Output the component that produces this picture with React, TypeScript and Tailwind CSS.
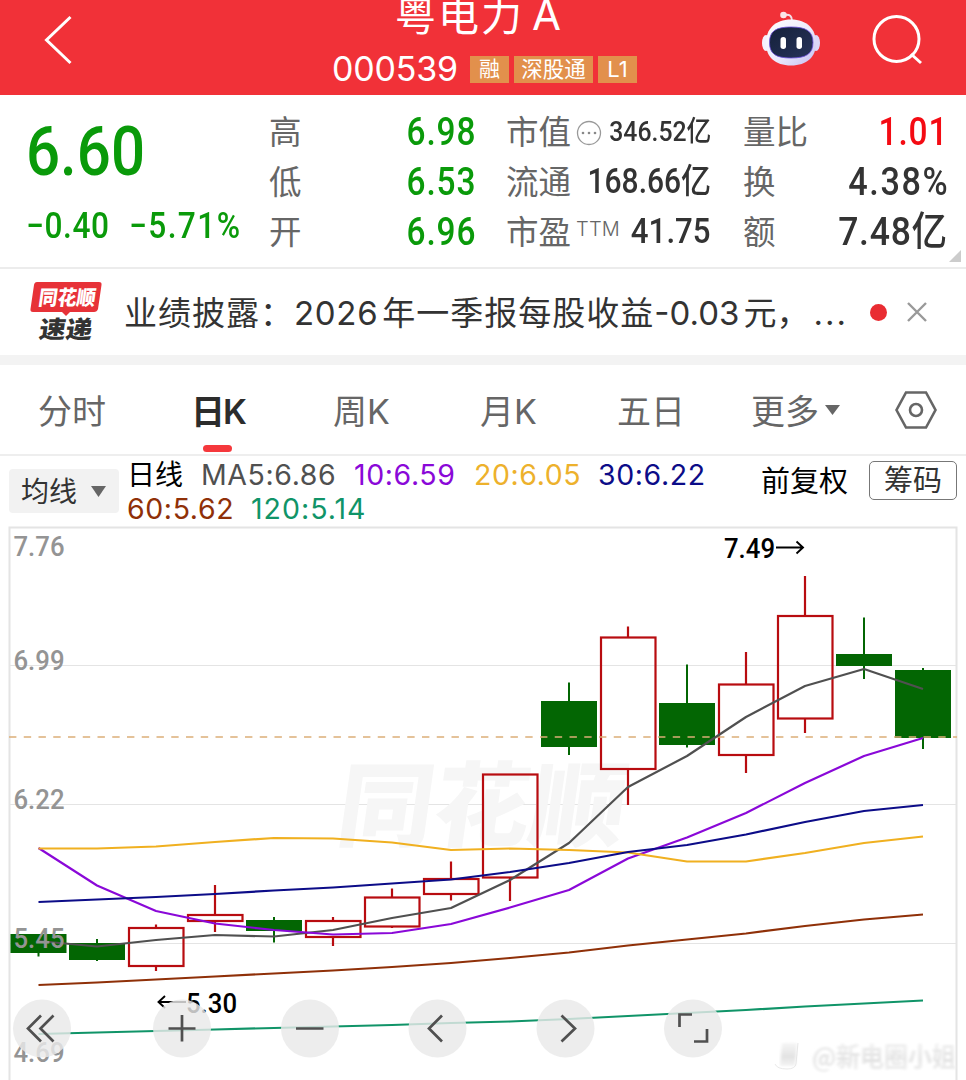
import React from "react";

const n = "font-['Roboto','Noto_Sans_CJK_SC',sans-serif] font-medium inline-block whitespace-nowrap";

type Row = { label: React.ReactNode; value: string; cls: string };

function Quotes({ rows, width }: { rows: Row[]; width: string }) {
  return (
    <div className={`flex flex-col ${width}`}>
      {rows.map((r, i) => (
        <div key={i} className="flex h-[50px] items-center justify-between whitespace-nowrap">
          <span className="flex items-center pt-[2px] text-[32.5px] text-[#666]">{r.label}</span>
          <span className={`${n} origin-right ${r.cls}`}>{r.value}</span>
        </div>
      ))}
    </div>
  );
}

const xs = [38.5, 97, 156, 215, 274, 333, 392, 451, 510, 569, 628, 687, 746, 805, 864, 923];

// [body top, body bottom, high, low, rising]
const candles: [number, number, number, number, boolean][] = [
  [934, 953, 934, 956.5, false],
  [943, 960, 939, 961, false],
  [928, 966, 924.5, 971, true],
  [915, 921, 885, 932, true],
  [920, 931, 917, 942.5, false],
  [921, 937, 917, 946, true],
  [897.5, 926.5, 888.5, 928, true],
  [879, 894, 861.5, 900.5, true],
  [774.5, 877.5, 775, 901, true],
  [701, 747, 682.5, 755, false],
  [637.5, 769, 626.5, 805, true],
  [703, 745, 664.5, 747.5, false],
  [684.5, 755, 652, 773, true],
  [616, 718.5, 576, 733, true],
  [654, 666, 617.5, 679, false],
  [670, 738, 668, 749, false],
];

const lines: { color: string; ys: number[] }[] = [
  { color: "#505050", ys: [941, 946.5, 940, 935, 936.5, 930, 918, 908, 880, 843, 787, 756, 717, 686, 669, 689] },
  { color: "#8a08d8", ys: [848, 885.5, 911, 923.5, 930, 934.5, 933, 924, 907.5, 890, 858.5, 837.5, 813, 783, 756, 738] },
  { color: "#f0b020", ys: [848.5, 848.5, 846.5, 842, 838, 838.5, 842.5, 850, 848.5, 850, 852.5, 861.5, 861.5, 853, 843, 836.5] },
  { color: "#0c0c88", ys: [902, 899.5, 897, 894, 890.5, 887.5, 883.5, 879.5, 872, 863, 852, 845, 834.5, 822, 811, 805] },
  { color: "#8f3008", ys: [985, 982.5, 979.5, 976.5, 973.5, 970.5, 967, 963, 958, 952.5, 945.5, 939.5, 933.5, 926, 919.5, 914.5] },
  { color: "#109468", ys: [1034, 1032.5, 1031, 1029.5, 1028, 1026.5, 1025, 1023, 1021.5, 1019, 1016, 1013, 1010, 1006.5, 1003.5, 1000.5] },
];

const axis: [string, number][] = [["7.76", 556], ["6.99", 670], ["6.22", 809], ["5.45", 948], ["4.69", 1062]];

function Chart() {
  return (
    <svg viewBox="0 524 966 556" className="block h-[556px] w-[966px]">
      <defs>
        <linearGradient id="ghost" x1="0" y1="0" x2="0" y2="1">
          <stop offset="0" stopColor="#f6f6f6" />
          <stop offset=".6" stopColor="#e2e2e2" />
          <stop offset="1" stopColor="#f4f4f4" />
        </linearGradient>
        <filter id="soft" x="-5%" y="-20%" width="110%" height="140%"><feGaussianBlur stdDeviation="1.6 1.2" /></filter>
      </defs>
      <g fill="none" stroke="#e4e4e4">
        <path d="M9.5 1080V527.5H956.5V1080" strokeWidth="2" />
        <path d="M10 665.5H956M10 804.5H956M10 943.5H956" strokeWidth="1" />
      </g>
      <g transform="translate(334 839) skewX(-8)" fill="#f6f6f6">
        <text className="font-['Noto_Sans_CJK_SC',sans-serif] font-black" fontSize="92" textLength="288" lengthAdjust="spacingAndGlyphs">同花顺</text>
      </g>
      {candles.map(([t, b, h, l, up], i) =>
        up ? (
          <g key={i} stroke="#b80c10" strokeWidth="2.2" fill="none">
            <path d={`M${xs[i]} ${h}V${t}M${xs[i]} ${b}V${l}`} />
            <rect x={xs[i] - 27} y={t} width="54.5" height={b - t} />
          </g>
        ) : (
          <g key={i} fill="#036603">
            <rect x={xs[i] - 28} y={t} width="56" height={b - t} />
            <rect x={xs[i] - 1} y={h} width="2" height={l - h} />
          </g>
        ),
      )}
      <path d="M9 737H957" stroke="#dcae78" strokeWidth="1.3" strokeDasharray="7.4 7.35" />
      {lines.map((l) => (
        <polyline key={l.color} fill="none" stroke={l.color} strokeWidth="2.2" strokeLinejoin="round" points={l.ys.map((y, i) => `${xs[i]},${y}`).join(" ")} />
      ))}
      <g className="font-['Roboto',sans-serif] font-medium">
        {axis.map(([t, y]) => (
          <text key={t} x="13.5" y={y} fill="#949494" fontSize="28.5" textLength="51" lengthAdjust="spacingAndGlyphs">{t}</text>
        ))}
        <text x="724" y="558" fontSize="28.5" textLength="51" lengthAdjust="spacingAndGlyphs">7.49</text>
        <text x="186" y="1012.5" fontSize="28.5" textLength="51" lengthAdjust="spacingAndGlyphs">5.30</text>
      </g>
      <path d="M776 547.5H803M796.5 541.5L803 547.5L796.5 553.5M186 1002H159M165 996L158.500 1002L165 1008" fill="none" stroke="#000" strokeWidth="1.9" />
      <g fill="#e9e9e9" fillOpacity=".82">
        {[42, 182, 310, 437.5, 565.5, 693].map((x) => <circle key={x} cx={x} cy="1028.500" r="29" />)}
      </g>
      <g fill="none" stroke="#505050" strokeWidth="2.7">
        <path d="M41 1015.500L28 1028.500L41 1041.500M53.500 1015.500L40.500 1028.500L53.500 1041.500M168.500 1028.500H195.500M182 1015V1041.500M296 1028.500H323.500M442 1015.500L429 1028.500L442 1041.500M561.500 1015.500L575 1028.500L561.500 1041.500" />
        <path d="M679.500 1027V1014.500H692M707 1029V1041.500H694" />
      </g>
      <path d="M782 1043H797L795 1066H780Z" fill="url(#ghost)" filter="url(#soft)" />
      <path d="M775 1064Q777 1069 787 1069Q795 1069 796 1064L798 1043" fill="none" stroke="#dedede" strokeWidth="1" opacity=".7" />
      <g className="font-['Noto_Sans_CJK_SC',sans-serif] font-bold" fill="url(#ghost)" filter="url(#soft)">
        <text x="812" y="1067" fontSize="27" textLength="144" lengthAdjust="spacingAndGlyphs">@新电圈小姐</text>
      </g>
    </svg>
  );
}

function Robot() {
  return (
    <svg viewBox="0 0 60 56" className="h-[56px] w-[60px]">
      <defs>
        <linearGradient id="shell" x1="0" y1="0" x2="1" y2="1">
          <stop offset="0" stopColor="#fff" />
          <stop offset=".55" stopColor="#eceafc" />
          <stop offset="1" stopColor="#c3bdf0" />
        </linearGradient>
        <linearGradient id="face" x1="0" y1="0" x2="1" y2="1">
          <stop offset="0" stopColor="#14203a" />
          <stop offset="1" stopColor="#28345a" />
        </linearGradient>
      </defs>
      <path d="M23 4C29 3 31 5 31 10" fill="none" stroke="#f3dfe8" strokeWidth="2" />
      <circle cx="22.500" cy="4" r="3.300" fill="#fbe5e8" />
      <ellipse cx="5" cy="32" rx="4" ry="8" fill="#f4f1fd" />
      <ellipse cx="55" cy="32" rx="4" ry="8" fill="#dcd7f8" />
      <path d="M30 8.500C46 8.500 55 18 55 32C55 46 46 54.500 30 54.500C14 54.500 5 46 5 32C5 18 14 8.500 30 8.500Z" fill="url(#shell)" />
      <path d="M30 16C45 16 52 20 52 31.500C52 43 45 47 30 47C15 47 8.500 43 8.500 31.500C8.500 20 15 16 30 16Z" fill="url(#face)" stroke="#6b4edc" strokeWidth=".8" />
      <rect x="19.500" y="26" width="5.500" height="12" rx="2.700" fill="#fff" />
      <rect x="35.500" y="26" width="5.500" height="12" rx="2.700" fill="#fff" />
    </svg>
  );
}

export default function App() {
  const num = "text-[38px] tracking-[1px] -mr-px scale-x-[.88]";
  return (
    <div className="h-[1080px] w-[966px] overflow-hidden bg-white font-['Inter','Noto_Sans_CJK_SC',sans-serif] text-[#333]">
      <header className="flex h-[95px] items-start bg-[#f13138] text-white">
        <svg viewBox="0 0 332 95" className="h-[95px] w-[332px] shrink-0">
          <path d="M70.500 17L46.500 40L70.500 63" fill="none" stroke="#fff" strokeWidth="3" />
        </svg>
        <div className="flex w-[306px] shrink-0 flex-col">
          <div className="-mt-[14px] flex h-[56px] items-center pl-[63px] font-['Noto_Sans_CJK_SC',sans-serif] text-[41px] tracking-[2px] whitespace-nowrap">粤电力<span className="mt-[1px] ml-[8px] font-['Inter'] text-[42px] leading-[48px]">A</span></div>
          <div className="mt-[7px] flex h-[40px] items-center gap-[5px] whitespace-nowrap">
            <span className="mr-[6px] w-[127px] pb-px font-['Inter'] text-[34px] tracking-[-.2px]">000539</span>
            <span className="flex h-[27px] w-[39px] items-center justify-center bg-[#e2904c] text-[21px]">融</span>
            <span className="flex h-[27px] w-[79px] items-center justify-center bg-[#e2904c] text-[21.500px]">深股通</span>
            <span className="flex h-[27px] w-[39px] items-center justify-center bg-[#e2904c] text-[22px]">L1</span>
          </div>
        </div>
        <div className="ml-[123px] mt-[11px]"><Robot /></div>
        <svg viewBox="0 0 60 60" className="ml-[47px] mt-[11px] h-[60px] w-[60px]">
          <g fill="none" stroke="#fff" strokeWidth="3"><circle cx="28.500" cy="28" r="22.500" /><path d="M43 43L53 52" /></g>
        </svg>
      </header>

      <section className="relative flex h-[174px] border-b-2 border-[#ececec] pt-[12px]">
        <div className="w-[269px] shrink-0 pl-[26px] text-[#0a9a0a]">
          <div className={`${n} mt-[5px] origin-left scale-x-[.87] text-[69px] leading-[80px]`}>6.60</div>
          <div className="mt-[2px] flex h-[64px] items-center">
            <span className="w-[103px]"><span className={`${n} origin-left scale-x-[.88] text-[36px] tracking-[.7px]`}>−0.40</span></span>
            <span className={`${n} origin-left scale-x-[.88] text-[36px] tracking-[1.600px]`}>−5.71%</span>
          </div>
        </div>
        <Quotes width="w-[206px]" rows={[
          { label: "高", value: "6.98", cls: num + " text-[#0a9a0a]" },
          { label: "低", value: "6.53", cls: num + " text-[#0a9a0a]" },
          { label: "开", value: "6.96", cls: num + " text-[#0a9a0a]" },
        ]} />
        <div className="w-[31px] shrink-0" />
        <Quotes width="w-[205px]" rows={[
          { label: <>市值<svg viewBox="0 0 26 26" className="ml-[5px] h-[26px] w-[26px]"><circle cx="13" cy="13" r="11.500" fill="none" stroke="#999" strokeWidth="1.300" /><g fill="#888"><circle cx="7" cy="13" r="1.300" /><circle cx="13" cy="13" r="1.300" /><circle cx="19" cy="13" r="1.300" /></g></svg></>, value: "346.52亿", cls: "-ml-8 text-[28.500px] scale-x-[.87]" },
          { label: "流通", value: "168.66亿", cls: "-ml-8 text-[34.500px] scale-x-[.87]" },
          { label: <>市盈<span className="mb-2 ml-[5px] text-[20px] font-light tracking-[.2px]">TTM</span></>, value: "41.75", cls: "-ml-8 text-[35.500px] scale-x-[.88]" },
        ]} />
        <div className="w-[32px] shrink-0" />
        <Quotes width="w-[204px]" rows={[
          { label: "量比", value: "1.01", cls: num + " text-[#f40b13]" },
          { label: "换", value: "4.38%", cls: "text-[38px] tracking-[1.800px] -mr-[2px] scale-x-[.9]" },
          { label: "额", value: "7.48亿", cls: "text-[39.500px] tracking-[.8px] -mr-px scale-x-[.9]" },
        ]} />
        <svg viewBox="0 0 12 12" className="absolute right-[5px] bottom-[5px] h-3 w-3"><path d="M12 0V12H0Z" fill="#ccc" /></svg>
      </section>

      <section className="flex h-[86px] items-center whitespace-nowrap">
        <div className="relative ml-[30px] h-[60px] w-[94px] shrink-0">
          <svg viewBox="0 0 72 60" className="h-[60px] w-[72px]">
            <path d="M7 0H69Q72 0 71.500 3L68 27Q67 30 64 30H40L36 34L32 30H3Q0 30 .5 27L4 3Q4.500 0 7 0Z" fill="#e73238" />
            <g className="font-['Noto_Sans_CJK_SC',sans-serif] font-black" transform="skewX(-8)">
              <text x="11" y="22.500" fontSize="20.500" fill="#fff" textLength="57" lengthAdjust="spacingAndGlyphs">同花顺</text>
              <text x="16" y="56" fontSize="24" fill="#333" textLength="53" lengthAdjust="spacingAndGlyphs">速递</text>
            </g>
          </svg>
        </div>
        <div className="mt-[3px] flex w-[746px] items-center text-[33px] text-[#333]">
          <span className="tracking-[1px]">业绩披露：</span><span className="tracking-[.7px]">2026</span>
          <span className="ml-[4px] tracking-[1px]">年一季报每股收益</span><span>-0.03</span><span className="ml-[4px]">元，</span><span className="ml-1 tracking-[2px]">...</span>
        </div>
        <i className="h-[17px] w-[17px] shrink-0 rounded-full bg-[#e92c32]" />
        <svg viewBox="0 0 20 20" className="ml-[20px] h-5 w-5 shrink-0"><path d="M1 1L19 19M19 1L1 19" stroke="#999" strokeWidth="2.400" /></svg>
      </section>
      <div className="h-[10px] bg-[#f3f3f3]" />

      <nav className="flex h-[91px] items-center border-b-2 border-[#eee] text-[34px] whitespace-nowrap text-[#666]">
        <span className="mt-[3px] ml-[38px] w-[153px] shrink-0">分时</span>
        <span className="relative mt-[3px] w-[142px] shrink-0 font-bold text-[#2c2c2c]"><span className="tracking-[-2px]">日</span><span className="font-semibold">K</span><i className="absolute top-[59px] left-[12px] h-[7px] w-[29px] rounded-full bg-[#f5383c]" /></span>
        <span className="mt-[3px] w-[147px] shrink-0">周K</span>
        <span className="mt-[3px] w-[137px] shrink-0">月K</span>
        <span className="mt-[3px] w-[134px] shrink-0">五日</span>
        <span className="mt-[3px] w-[74px] shrink-0">更多</span>
        <svg viewBox="0 0 15 10" className="h-[10px] w-[15px]"><path d="M0 0H15L7.500 10Z" fill="#666" /></svg>
        <svg viewBox="0 0 42 38" className="ml-[55px] h-[38px] w-[42px]"><g fill="none" stroke="#666" strokeWidth="2.600"><path d="M11 1.500H31L40.500 19L31 36.500H11L1.500 19Z" /><circle cx="21" cy="19" r="6" /></g></svg>
      </nav>

      <section className="flex h-[68px] items-start whitespace-nowrap">
        <div className="mt-[13px] ml-[9px] flex h-[44px] w-[110px] shrink-0 items-center gap-[14px] rounded bg-[#f2f2f2] pl-[12px] text-[28px]">
          <span className="mt-[2px]">均线</span><svg viewBox="0 0 15 11" className="h-[11px] w-[15px]"><path d="M0 0H15L7.500 11Z" fill="#666" /></svg>
        </div>
        <div className="mt-[2px] ml-[8px] w-[634px] shrink-0 text-[28.500px] leading-[34px] tracking-[.6px]">
          <div className="flex h-[34px]">
            <span className="w-[74px] text-[28px] tracking-normal text-black">日线</span>
            <span className="w-[153px] text-[#505050]">MA5:6.86</span>
            <span className="w-[120px] text-[#8a08d8]">10:6.59</span>
            <span className="w-[124px] text-[#edb12c]">20:6.05</span>
            <span className="text-[#0c0c88]">30:6.22</span>
          </div>
          <div className="flex h-[34px]">
            <span className="w-[124px] text-[#8f3008]">60:5.62</span>
            <span className="tracking-[1px] text-[#109468]">120:5.14</span>
          </div>
        </div>
        <span className="mt-[4px] w-[108px] shrink-0 text-[29px] text-black">前复权</span>
        <span className="mt-[5px] flex h-[39px] w-[88px] shrink-0 items-center justify-center rounded-[5px] border-[1.500px] border-[#777] text-[29px]">筹码</span>
      </section>
      <Chart />
    </div>
  );
}
